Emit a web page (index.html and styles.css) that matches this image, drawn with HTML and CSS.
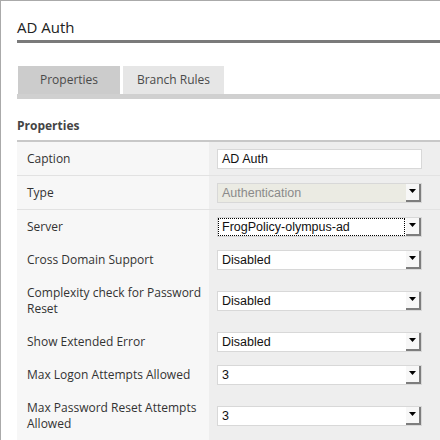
FILE: index.html
```html
<!DOCTYPE html>
<html>
<head>
<meta charset="utf-8">
<link rel="stylesheet" href="styles.css">
</head>
<body>
<div class="page">
  <h1 class="title">AD Auth</h1>
  <div class="tabs">
    <div class="tab active">Properties</div>
    <div class="tab">Branch Rules</div>
  </div>
  <h2 class="section">Properties</h2>
  <div class="props">
    <div class="row sep">
      <div class="label">Caption</div>
      <div class="value"><div class="input">AD Auth</div></div>
    </div>
    <div class="row sep">
      <div class="label">Type</div>
      <div class="value"><div class="select disabled"><span class="val">Authentication</span><span class="btn"><svg width="7" height="4" viewBox="0 0 7 4"><polygon points="0,0 7,0 3.5,4" fill="#000"/></svg></span></div></div>
    </div>
    <div class="row">
      <div class="label">Server</div>
      <div class="value"><div class="select"><span class="val focus">FrogPolicy-olympus-ad</span><span class="btn"><svg width="7" height="4" viewBox="0 0 7 4"><polygon points="0,0 7,0 3.5,4" fill="#000"/></svg></span></div></div>
    </div>
    <div class="row">
      <div class="label">Cross Domain Support</div>
      <div class="value"><div class="select"><span class="val">Disabled</span><span class="btn"><svg width="7" height="4" viewBox="0 0 7 4"><polygon points="0,0 7,0 3.5,4" fill="#000"/></svg></span></div></div>
    </div>
    <div class="row">
      <div class="label">Complexity check for Password Reset</div>
      <div class="value"><div class="select"><span class="val">Disabled</span><span class="btn"><svg width="7" height="4" viewBox="0 0 7 4"><polygon points="0,0 7,0 3.5,4" fill="#000"/></svg></span></div></div>
    </div>
    <div class="row">
      <div class="label">Show Extended Error</div>
      <div class="value"><div class="select"><span class="val">Disabled</span><span class="btn"><svg width="7" height="4" viewBox="0 0 7 4"><polygon points="0,0 7,0 3.5,4" fill="#000"/></svg></span></div></div>
    </div>
    <div class="row">
      <div class="label">Max Logon Attempts Allowed</div>
      <div class="value"><div class="select"><span class="val">3</span><span class="btn"><svg width="7" height="4" viewBox="0 0 7 4"><polygon points="0,0 7,0 3.5,4" fill="#000"/></svg></span></div></div>
    </div>
    <div class="row">
      <div class="label">Max Password Reset Attempts Allowed</div>
      <div class="value"><div class="select"><span class="val">3</span><span class="btn"><svg width="7" height="4" viewBox="0 0 7 4"><polygon points="0,0 7,0 3.5,4" fill="#000"/></svg></span></div></div>
    </div>
  </div>
</div>
</body>
</html>
```
FILE: styles.css
```css
html, body {
  margin: 0;
  padding: 0;
  background: #fff;
}
body {
  font-family: "Open Sans", "DejaVu Sans", sans-serif;
  color: #333;
}
.page {
  width: 440px;
  height: 440px;
  box-sizing: border-box;
  border-top: 1px solid #aaa;
  border-left: 1px solid #aaa;
  padding-left: 16px;
  overflow: hidden;
}
.title {
  margin: 0;
  padding-top: 16px;
  padding-bottom: 3px;
  font-size: 15px;
  line-height: 20px;
  font-weight: 400;
  color: #222;
  border-bottom: 3px solid #7a7a7a;
}
.tabs {
  margin-top: 23px;
  display: flex;
  gap: 3px;
  padding-left: 1px;
  border-bottom: 5px solid #d0d0d0;
}
.tab {
  height: 28px;
  line-height: 28px;
  width: 101px;
  text-align: center;
  font-size: 12px;
  color: #4a4a4a;
  background: #e6e6e6;
}
.tab.active {
  width: 102px;
  background: #cccccc;
}
.section {
  margin: 19px 0 6px;
  font-size: 12px;
  line-height: 16px;
  font-weight: 700;
  color: #444;
}
.props {
  border-top: 2px solid #c8c8c8;
}
.row {
  display: flex;
}
.row.sep {
  border-bottom: 1px solid #e2e2e2;
}
.label {
  width: 192px;
  box-sizing: border-box;
  padding: 9px 4px 8px 10px;
  font-size: 12px;
  line-height: 16px;
  color: #333;
  background: #f7f7f7;
}
.value {
  flex: 1;
  background: #eeeeee;
  display: flex;
  align-items: center;
  padding-left: 8px;
}
.input, .select {
  width: 205px;
  height: 20px;
  box-sizing: border-box;
  border: 1px solid #d8d8d8;
  background: #fff;
  font-family: "Liberation Sans", Arial, sans-serif;
  font-size: 12.5px;
  color: #111;
}
.input {
  padding-left: 4px;
  line-height: 18px;
}
.select {
  display: flex;
}
.select.disabled {
  background: #ebebe3;
  color: #8a8a8a;
}
.val {
  flex: 1;
  padding-left: 4px;
  line-height: 18px;
  white-space: nowrap;
}
.val.focus {
  outline: 1px dotted #000;
  outline-offset: -1px;
}
.btn {
  width: 13px;
  margin-left: 1px;
  box-sizing: content-box;
  border-right: 2px solid #7d7d7d;
  border-bottom: 2px solid #7d7d7d;
  background: #f7f7f7;
  display: flex;
  justify-content: center;
  align-items: center;
  padding-bottom: 1px;
}
.btn svg {
  display: block;
}
```
